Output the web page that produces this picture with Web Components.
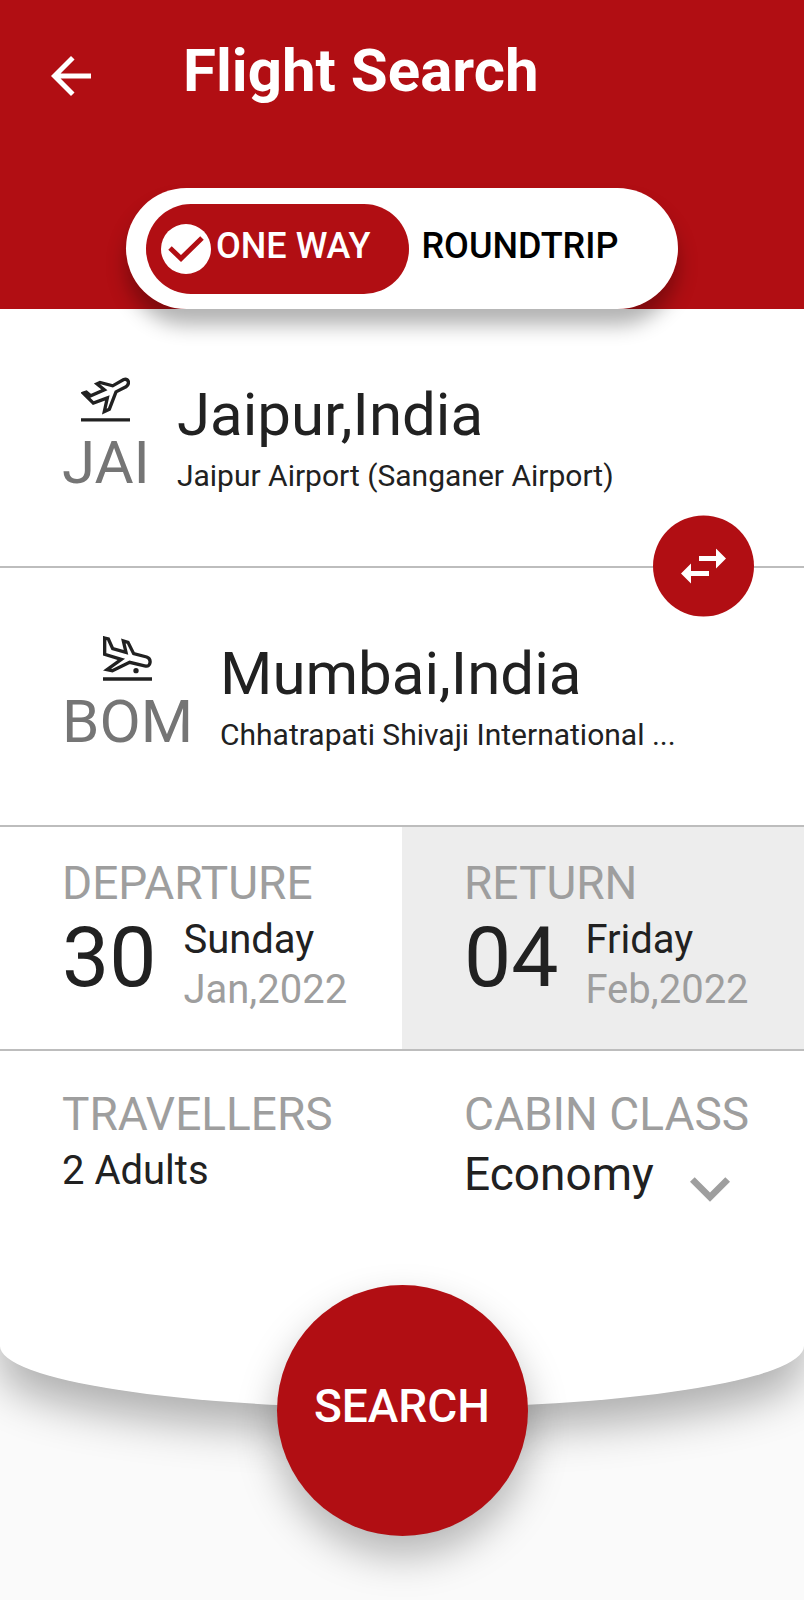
<!DOCTYPE html>
<html lang="en">
<head>
<meta charset="utf-8">
<meta name="viewport" content="width=device-width, initial-scale=1">
<title>Flight Search</title>
<style>
  body {
    margin: 0;
    background: #fafafa;
    color: #212121;
    font-family: Roboto, "Liberation Sans", sans-serif;
    --red: #b10e13;
    --line: #bdbdbd;
    --muted: #9e9e9e;
    --side: 62px;
  }
</style>
</head>
<body>
<flight-search></flight-search>

<script>
const buttonReset = /*css*/`
  button {
    margin: 0;
    padding: 0;
    border: 0;
    background: none;
    color: inherit;
    font: inherit;
    text-align: left;
    cursor: pointer;
  }
`;

class AppHeader extends HTMLElement {
  constructor() {
    super();
    this.attachShadow({mode: 'open'});
    this.shadowRoot.innerHTML = `${this.css()}${this.html()}`;
  }

  css() {
    return /*css*/`<style>
      :host {
        display: block;
        position: relative;
        z-index: 1;
        background: var(--red);
        color: #fff;
      }
      .bar {
        display: flex;
        align-items: flex-end;
        gap: 82px;
        padding: 36px 41px 82px;
      }
      a {
        display: flex;
        color: inherit;
      }
      h1 {
        margin: 0;
        font-size: 60px;
        line-height: 70px;
        font-weight: 700;
      }
    </style>`;
  }

  html() {
    return /*html*/`
      <div class="bar">
        <a href="#" aria-label="Back">
          <svg width="60" height="60" viewBox="0 0 24 24" fill="currentColor"><path d="M20 11H7.83l5.59-5.59L12 4l-8 8 8 8 1.41-1.41L7.83 13H20v-2z"/></svg>
        </a>
        <h1><slot></slot></h1>
      </div>
      <slot name="toggle"></slot>
    `;
  }
}
customElements.define('app-header', AppHeader);

class TripToggle extends HTMLElement {
  constructor() {
    super();
    this.attachShadow({mode: 'open'});
    this.shadowRoot.innerHTML = `${this.css()}${this.html()}`;
  }

  css() {
    return /*css*/`<style>
      :host {
        display: flex;
        width: fit-content;
        margin: 0 auto;
      }
      fieldset {
        display: flex;
        box-sizing: border-box;
        min-width: 552px;
        margin: 0;
        padding: 16px 20px 15px;
        border: 0;
        border-radius: 61px;
        background: #fff;
        box-shadow: 0 16px 20px rgba(0, 0, 0, 0.3);
      }
      label {
        display: flex;
        align-items: center;
        height: 90px;
        padding: 0 12px;
        border-radius: 45px;
        color: #000;
        font-size: 36px;
        line-height: 48px;
        font-weight: 500;
        cursor: pointer;
      }
      label span {
        padding-bottom: 6px;
      }
      input {
        position: absolute;
        opacity: 0;
      }
      svg {
        display: none;
      }
      label:has(input:checked) {
        gap: 5px;
        padding: 0 39px 0 15px;
        background: var(--red);
        color: #fff;
      }
      label:has(input:checked) svg {
        display: block;
      }
    </style>`;
  }

  html() {
    const tick = '<svg width="50" height="50" viewBox="0 0 50 50"><circle cx="25" cy="25" r="25" fill="#fff"/><path d="M9 24 20 34.500 41 14" fill="none" stroke="var(--red)" stroke-width="5"/></svg>';
    return /*html*/`
      <fieldset aria-label="Trip type">
        <label><input type="radio" name="trip" checked>${tick}<span>ONE WAY</span></label>
        <label><input type="radio" name="trip">${tick}<span>ROUNDTRIP</span></label>
      </fieldset>
    `;
  }
}
customElements.define('trip-toggle', TripToggle);

class AirportRow extends HTMLElement {
  constructor() {
    super();
    this.attachShadow({mode: 'open'});
    this.shadowRoot.innerHTML = `${this.css()}${this.html()}`;
  }

  css() {
    return /*css*/`<style>
      ${buttonReset}
      :host {
        display: block;
        border-bottom: 2px solid var(--line);
      }
      button {
        display: flex;
        align-items: flex-end;
        gap: 27px;
        width: 100%;
        padding: 68px 100px 73px var(--side);
      }
      .code {
        display: flex;
        flex-direction: column;
        align-items: center;
        gap: 11px;
        color: #757575;
        font-size: 60px;
        line-height: 60px;
      }
      .place {
        display: flex;
        flex-direction: column;
        gap: 14px;
        min-width: 0;
        font-size: 60px;
        line-height: 60px;
      }
      .airport {
        overflow: hidden;
        font-size: 30px;
        line-height: 34px;
        text-overflow: ellipsis;
        white-space: nowrap;
      }
    </style>`;
  }

  html() {
    return /*html*/`
      <button type="button">
        <span class="code"><slot name="icon"></slot><slot name="code"></slot></span>
        <span class="place">
          <slot name="city"></slot>
          <span class="airport"><slot name="airport"></slot></span>
        </span>
      </button>
    `;
  }
}
customElements.define('airport-row', AirportRow);

class SwapButton extends HTMLElement {
  constructor() {
    super();
    this.attachShadow({mode: 'open'});
    this.shadowRoot.innerHTML = `${this.css()}${this.html()}`;
  }

  css() {
    return /*css*/`<style>
      ${buttonReset}
      :host {
        display: block;
      }
      button {
        display: grid;
        place-items: center;
        width: 101px;
        height: 101px;
        border-radius: 50%;
        background: var(--red);
        color: #fff;
      }
    </style>`;
  }

  html() {
    return /*html*/`
      <button type="button" aria-label="Swap airports">
        <svg width="46" height="36" viewBox="0 0 46 36" fill="currentColor"><path d="M18 7.500h17V0l10 10-10 10v-7.500H18zM28 22.500v5H10V35L0 25l10-10v7.500z"/></svg>
      </button>
    `;
  }
}
customElements.define('swap-button', SwapButton);

class DateField extends HTMLElement {
  constructor() {
    super();
    this.attachShadow({mode: 'open'});
    this.shadowRoot.innerHTML = `${this.css()}${this.html()}`;
  }

  css() {
    return /*css*/`<style>
      ${buttonReset}
      :host {
        display: block;
      }
      :host([inactive]) {
        background: #ededed;
      }
      button {
        display: flex;
        flex-direction: column;
        gap: 9px;
        width: 100%;
        padding: 33px 0 34px var(--side);
      }
      .label {
        color: var(--muted);
        font-size: 46px;
        line-height: 46px;
      }
      .date {
        display: flex;
        gap: 27px;
      }
      .number {
        font-size: 84px;
        line-height: 86px;
      }
      .rest {
        display: flex;
        flex-direction: column;
        font-size: 40px;
        line-height: 50px;
      }
      .month {
        color: var(--muted);
      }
    </style>`;
  }

  html() {
    return /*html*/`
      <button type="button">
        <span class="label"><slot></slot></span>
        <span class="date">
          <span class="number"><slot name="number"></slot></span>
          <span class="rest">
            <slot name="day"></slot>
            <span class="month"><slot name="month"></slot></span>
          </span>
        </span>
      </button>
    `;
  }
}
customElements.define('date-field', DateField);

class TravellersField extends HTMLElement {
  constructor() {
    super();
    this.attachShadow({mode: 'open'});
    this.shadowRoot.innerHTML = `${this.css()}${this.html()}`;
  }

  css() {
    return /*css*/`<style>
      ${buttonReset}
      :host {
        display: block;
      }
      button {
        display: flex;
        flex-direction: column;
        gap: 9px;
        width: 100%;
        padding: 40px 0 0 var(--side);
        font-size: 40px;
        line-height: 50px;
      }
      .label {
        color: var(--muted);
        font-size: 46px;
        line-height: 46px;
      }
    </style>`;
  }

  html() {
    return /*html*/`
      <button type="button">
        <span class="label">TRAVELLERS</span>
        <slot></slot>
      </button>
    `;
  }
}
customElements.define('travellers-field', TravellersField);

class CabinSelect extends HTMLElement {
  constructor() {
    super();
    this.attachShadow({mode: 'open'});
    this.shadowRoot.innerHTML = `${this.css()}${this.html()}`;
  }

  css() {
    return /*css*/`<style>
      :host {
        display: flex;
        flex-direction: column;
        gap: 9px;
        padding: 40px 0 0 var(--side);
      }
      label {
        color: var(--muted);
        font-size: 46px;
        line-height: 46px;
        white-space: nowrap;
      }
      .field {
        display: grid;
        width: 266px;
      }
      select, svg {
        grid-area: 1 / 1;
      }
      select {
        margin: 0;
        padding: 0;
        border: 0;
        appearance: none;
        background: none;
        color: inherit;
        font: inherit;
        font-size: 46px;
        line-height: 56px;
      }
      svg {
        place-self: end;
        color: var(--muted);
        pointer-events: none;
      }
    </style>`;
  }

  html() {
    return /*html*/`
      <label for="cabin">CABIN CLASS</label>
      <div class="field">
        <select id="cabin"><option>Economy</option></select>
        <svg width="40" height="25" viewBox="6 8.590 12 7.410" fill="currentColor"><path d="M7.410 8.590 12 13.170l4.590-4.580L18 10l-6 6-6-6z"/></svg>
      </div>
    `;
  }
}
customElements.define('cabin-select', CabinSelect);

class SearchButton extends HTMLElement {
  constructor() {
    super();
    this.attachShadow({mode: 'open'});
    this.shadowRoot.innerHTML = `${this.css()}${this.html()}`;
  }

  css() {
    return /*css*/`<style>
      ${buttonReset}
      :host {
        display: flex;
        justify-content: center;
        position: relative;
        margin-top: -123px;
        padding-bottom: 64px;
      }
      button {
        width: 251px;
        height: 251px;
        padding-bottom: 10px;
        border-radius: 50%;
        background: var(--red);
        box-shadow: 0 20px 40px rgba(0, 0, 0, 0.28);
        color: #fff;
        font-size: 46px;
        font-weight: 500;
        text-align: center;
      }
    </style>`;
  }

  html() {
    return /*html*/`<button type="submit"><slot></slot></button>`;
  }
}
customElements.define('search-button', SearchButton);

class FlightSearch extends HTMLElement {
  constructor() {
    super();
    this.attachShadow({mode: 'open'});
    this.shadowRoot.innerHTML = `${this.css()}${this.html()}`;
  }

  css() {
    return /*css*/`<style>
      :host {
        display: block;
        overflow: hidden;
      }
      .sheet {
        padding-bottom: 206px;
        border-radius: 0 0 50% 50% / 0 0 62px 62px;
        background: #fff;
        box-shadow: 0 24px 44px rgba(0, 0, 0, 0.3);
      }
      .from {
        position: relative;
      }
      /* sits on the line between the two airports */
      swap-button {
        position: absolute;
        right: 50px;
        bottom: 2px;
        transform: translateY(50%);
      }
      .pair {
        display: grid;
        grid-template-columns: 1fr 1fr;
      }
      .dates {
        border-bottom: 2px solid var(--line);
      }
      airport-row svg {
        fill: none;
        stroke: #212121;
        stroke-width: 10;
      }
    </style>`;
  }

  html() {
    return /*html*/`
      <app-header>
        Flight Search
        <trip-toggle slot="toggle"></trip-toggle>
      </app-header>
      <main class="sheet">
        <div class="from">
          <airport-row>
            <svg slot="icon" width="49" height="45" viewBox="93 53 147 134"><path d="M100 101 109 98 122 109 163 91 141 73 150 69 188 79 221 60Q231 57 235 66 237 76 228 82L198 97 178 149 163 156 172 115 130 131Z"/><path d="M93 181H240"/></svg>
            <span slot="code">JAI</span>
            <span slot="city">Jaipur,India</span>
            <span slot="airport">Jaipur Airport (Sanganer Airport)</span>
          </airport-row>
          <swap-button></swap-button>
        </div>
        <airport-row>
          <svg slot="icon" width="49" height="45" viewBox="158 48 147 135"><path d="M163 54 174 57 187 86 227 97 219 63 233 67 250 101 289 111Q301 115 299 128 297 140 286 138L238 127 186 152 170 149 213 118 163 103Z"/><circle cx="257" cy="152" r="8" fill="#212121" stroke="none"/><path d="M158 177H305"/></svg>
          <span slot="code">BOM</span>
          <span slot="city">Mumbai,India</span>
          <span slot="airport">Chhatrapati Shivaji International ...</span>
        </airport-row>
        <div class="pair dates">
          <date-field>DEPARTURE
            <span slot="number">30</span>
            <span slot="day">Sunday</span>
            <span slot="month">Jan,2022</span>
          </date-field>
          <date-field inactive>RETURN
            <span slot="number">04</span>
            <span slot="day">Friday</span>
            <span slot="month">Feb,2022</span>
          </date-field>
        </div>
        <div class="pair">
          <travellers-field>2 Adults</travellers-field>
          <cabin-select></cabin-select>
        </div>
      </main>
      <search-button>SEARCH</search-button>
    `;
  }
}
customElements.define('flight-search', FlightSearch);
</script>
</body>
</html>
